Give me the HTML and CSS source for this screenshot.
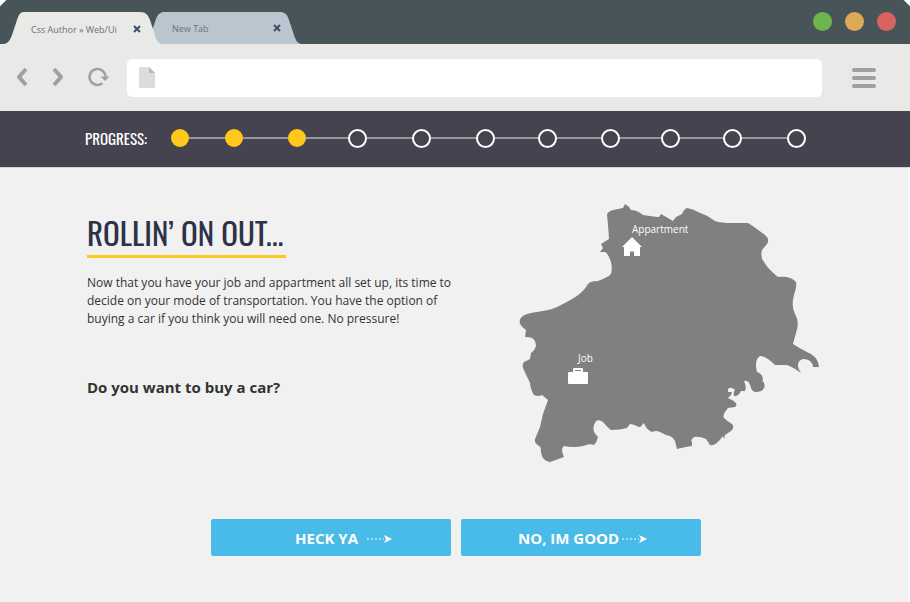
FILE: index.html
```html
<!DOCTYPE html>
<html lang="en">
<head>
<meta charset="utf-8">
<meta name="viewport" content="width=device-width, initial-scale=1">
<title>Rollin’ on out...</title>
<link rel="stylesheet" href="styles.css">
</head>
<body>
<header class="browser">
  <div class="titlebar">
    <div class="tabs">
      <div class="tab tab-active">
        <svg class="tab-shape" viewBox="0 0 153 32" preserveAspectRatio="none" aria-hidden="true"><path d="M3 32C9 32 11 26 13 20L17 8C19 2 20 0 25 0H140C146 0 148 3 150 8L154 20C156 28 158 32 163 32Z"/></svg>
        <a class="tab-title" href="#">Css Author » Web/Ui</a>
        <button class="tab-close" aria-label="Close tab"><svg viewBox="0 0 8 8"><path d="M1 1L7 7M7 1L1 7"/></svg></button>
      </div>
      <div class="tab tab-idle">
        <svg class="tab-shape" viewBox="0 0 148 32" preserveAspectRatio="none" aria-hidden="true"><path d="M0 32V16L3 7C5 2 7 0 12 0H126C132 0 134 2 136 8L140 20C142 27 144 32 149 32Z"/></svg>
        <a class="tab-title" href="#">New Tab</a>
        <button class="tab-close" aria-label="Close tab"><svg viewBox="0 0 8 8"><path d="M1 1L7 7M7 1L1 7"/></svg></button>
      </div>
    </div>
    <div class="window-controls">
      <button class="dot green" aria-label="Minimize"></button>
      <button class="dot amber" aria-label="Maximize"></button>
      <button class="dot red" aria-label="Close"></button>
    </div>
  </div>
  <div class="toolbar">
    <div class="nav">
      <button class="icon-btn" aria-label="Back"><svg width="12" height="20" viewBox="0 0 12 20"><path d="M10 2L3 10L10 18" fill="none" stroke="#a0a09f" stroke-width="4" stroke-linejoin="round"/></svg></button>
      <button class="icon-btn" aria-label="Forward"><svg width="12" height="20" viewBox="0 0 12 20"><path d="M2 2L9 10L2 18" fill="none" stroke="#a0a09f" stroke-width="4" stroke-linejoin="round"/></svg></button>
      <button class="icon-btn" aria-label="Reload"><svg width="22" height="20" viewBox="0 0 22 20"><path d="M14.500 16.200A8 8 0 1 1 17.500 9.500" fill="none" stroke="#a0a09f" stroke-width="2.500"/><path d="M12.500 9.500H21.500L17 14Z" fill="#a0a09f"/></svg></button>
    </div>
    <div class="address">
      <svg width="16" height="21" viewBox="0 0 16 21" aria-hidden="true"><path d="M0 0H10L16 6V21H0Z" fill="#dcdcdb"/><path d="M10 0L16 6H10Z" fill="#b9b9b8"/></svg>
      <input type="text" aria-label="Address">
    </div>
    <button class="icon-btn menu" aria-label="Menu"><svg width="24" height="20" viewBox="0 0 24 20"><path d="M2 2H22M2 10H22M2 18H22" stroke="#a0a09f" stroke-width="4" stroke-linecap="round"/></svg></button>
  </div>
</header>
<section class="progress">
  <h2 class="progress-label">PROGRESS:</h2>
  <ol class="steps" aria-label="Progress">
    <li class="done"></li><li class="done"></li><li class="done"></li><li></li><li></li><li></li><li></li><li></li><li></li><li></li><li></li>
  </ol>
</section>
<main class="page">
  <div class="content">
    <div class="copy">
      <h1>ROLLIN’ ON OUT...</h1>
      <p class="intro">Now that you have your job and appartment all set up, its time to decide on your mode of transportation. You have the option of buying a car if you think you will need one. No pressure!</p>
      <p class="question">Do you want to buy a car?</p>
    </div>
    <div class="map">
      <svg class="land" viewBox="0 0 320 275" aria-hidden="true"><path d="M97 20Q97 17 103 15L113 13L115 9L119 12L121 15Q127 15 133 20L147 22L149 22L151 19L158 23L163 26L166 22L172 19Q174 14 177 13Q183 14 188 17Q197 20 205 26Q211 28 222 28L238 28Q243 31 255 40Q260 44 257 49L252 55Q250 62 254 67Q258 74 268 82Q281 81 286 87Q287 91 284 100Q281 111 285 119Q290 127 286 138L283 149Q289 153 297 157Q308 161 309 172L303 172Q302 164 293 164Q284 167 291 178Q281 171 277 170L265 170Q256 161 250 161Q244 165 247 177Q253 179 253 185L252 185Q258 192 251 196Q243 199 241 193Q239 184 234 186Q237 192 235 196L231 196Q228 202 224 201Q223 197 225 195Q221 191 218 194L218 197L222 197L221 200L218 203L222 205Q229 209 225 212L218 213Q212 220 214 223Q217 226 222 229Q225 232 221 236L215 240L214 244L213 241Q205 252 200 250L196 244Q189 241 184 242Q180 245 182 247L182 251Q175 252 171 253L167 254L165 246Q164 243 160 241Q155 240 150 237Q146 235 142 237Q136 234 135 230L133 228Q132 232 129 232Q123 229 120 229L117 233Q110 235 101 235Q98 233 93 227Q89 224 86 226Q80 235 88 242Q87 247 84 250Q80 248 73 251Q64 253 54 251Q50 254 54 262L40 267Q32 266 31 257Q31 251 29 251Q24 248 25 244L30 232L33 219L38 205L32 200Q28 202 24 200Q21 196 20 188L13 173Q12 169 14 167L20 164L21 158Q25 155 26 151Q26 141 15 142L16 135Q8 129 10 125Q11 119 27 117L38 115Q45 114 62 104Q73 98 78 89Q80 86 88 86Q98 82 100 80Q103 77 101 67Q98 58 95 57L90 57L93 53L91 49Q94 47 99 44L98 30Z"/></svg>
      <div class="place home">
        <span>Appartment</span>
        <svg width="20" height="19" viewBox="0 0 20 19" aria-hidden="true"><path d="M10 0L20 10H18V19H12V14.500H8V19H2V10H0Z"/></svg>
      </div>
      <div class="place job">
        <span>Job</span>
        <svg width="20" height="16" viewBox="0 0 20 16" aria-hidden="true"><path fill-rule="evenodd" d="M5 4V1Q5 0 6 0H14Q15 0 15 1V4H19Q20 4 20 5V15Q20 16 19 16H1Q0 16 0 15V5Q0 4 1 4ZM7 2V3H13V2Z"/></svg>
      </div>
    </div>
  </div>
  <div class="actions">
    <button class="choice yes">HECK YA <svg width="26" height="8" viewBox="0 0 26 8" aria-hidden="true"><path d="M1 4H18" stroke="#fff" stroke-dasharray="2 2"/><path d="M18 0L26 4L18 8L20 4Z" fill="#fff"/></svg></button>
    <button class="choice no">NO, IM GOOD <svg width="26" height="8" viewBox="0 0 26 8" aria-hidden="true"><path d="M1 4H18" stroke="#fff" stroke-dasharray="2 2"/><path d="M18 0L26 4L18 8L20 4Z" fill="#fff"/></svg></button>
  </div>
</main>
</body>
</html>
```
FILE: styles.css
```css
*, *::before, *::after { box-sizing: border-box; }

body {
  margin: 0;
  min-height: 100vh;
  display: flex;
  flex-direction: column;
  background: #f1f1f1;
  color: #333;
  font-family: "Open Sans", "Noto Sans", sans-serif;
}

h1, h2, p, ol { margin: 0; padding: 0; font-weight: 400; }
button { border: 0; padding: 0; background: none; font: inherit; color: inherit; }
svg { display: block; }

.titlebar {
  display: flex;
  justify-content: space-between;
  height: 44px;
  background: linear-gradient(135deg, #fff 4px, transparent 5px), linear-gradient(225deg, #fff 4px, transparent 5px), #475559;
}
.tabs { display: flex; align-items: flex-end; }
.tab {
  position: relative;
  display: flex;
  align-items: center;
  justify-content: space-between;
  height: 32px;
  font-size: 9px;
  color: #6f6f74;
}
.tab-active { width: 153px; padding: 2px 12px 0 31px; z-index: 1; }
.tab-idle { width: 148px; padding: 0 20px 0 19px; color: #68737c; }
.tab-shape { position: absolute; left: 0; top: 0; width: 100%; height: 100%; overflow: visible; }
.tab-active .tab-shape { fill: #e9e9e7; }
.tab-idle .tab-shape { fill: #b9c6d0; }
.tab-title { position: relative; color: inherit; text-decoration: none; }
.tab-close { position: relative; }
.tab-close svg { width: 8px; height: 8px; fill: none; stroke: #3f5064; stroke-width: 2; }

.window-controls { display: flex; gap: 13px; align-items: center; padding: 0 14px 2px 0; }
.dot { width: 19px; height: 19px; border-radius: 50%; }
.green { background: #70b44c; }
.amber { background: #dcaa54; }
.red { background: #d9645e; }

.toolbar {
  display: flex;
  align-items: center;
  height: 67px;
  padding: 0 34px 0 16px;
  background: #e9e9e7;
}
.nav { display: flex; align-items: center; gap: 24px; width: 111px; padding-bottom: 2px; }
.address {
  flex: 1;
  display: flex;
  align-items: center;
  gap: 10px;
  height: 38px;
  padding: 0 12px;
  border-radius: 5px;
  background: #fff;
}
.address input { flex: 1; border: 0; outline: 0; background: none; font: inherit; font-size: 14px; }
.menu { margin-left: 30px; }

.progress {
  display: flex;
  align-items: center;
  height: 56px;
  padding: 0 104px 2px 85px;
  background: #44434f;
}
.progress-label {
  width: 86px;
  color: #fff;
  font-family: "Oswald", sans-serif;
  font-size: 15px;
  white-space: nowrap;
}
.steps {
  flex: 1;
  display: grid;
  grid-template-columns: 54fr 63fr 60fr 64fr 64fr 63fr 63fr 60fr 62fr 64fr 19px;
  list-style: none;
}
.steps li { display: flex; align-items: center; }
.steps li::before {
  content: "";
  flex: none;
  width: 19px;
  height: 19px;
  border: 2px solid #fff;
  border-radius: 50%;
}
.steps .done::before { width: 18px; height: 18px; border: 0; background: #ffc81b; }
.steps li:not(:last-child)::after { content: ""; flex: 1; height: 2px; background: #96959c; }

.page { flex: 1; border-top: 1px solid #d4d4d6; border-right: 2px solid #f8f8f8; }
.content {
  display: flex;
  justify-content: space-between;
  padding: 27px 78px 0 87px;
}
.copy { width: 372px; padding-top: 14px; }
h1 {
  width: 199px;
  border-bottom: 3px solid #ffc81b;
  color: #2c3349;
  font-family: "Oswald", sans-serif;
  font-size: 31px;
  line-height: 46px;
  white-space: nowrap;
}
.intro { margin-top: 16px; font-size: 12px; line-height: 18px; }
.question { margin-top: 48px; font-size: 15px; line-height: 22px; font-weight: 700; }

.map { position: relative; width: 320px; }
.land { width: 100%; fill: #808080; }
.place { position: absolute; color: #fff; font-size: 10px; line-height: 14px; }
.place svg { fill: #fff; }
.home { left: 122px; top: 27px; }
.home svg { margin-left: -10px; margin-top: 1px; }
.job { left: 68px; top: 156px; }
.job svg { margin-left: -10px; margin-top: 3px; }

.actions { display: flex; justify-content: center; gap: 10px; padding: 49px 0 46px 4px; }
.choice {
  display: flex;
  align-items: center;
  width: 240px;
  height: 37px;
  border-radius: 2px;
  background: #48bbe9;
  color: #fff;
  font-size: 15px;
  font-weight: 700;
}
.yes { gap: 8px; padding-left: 84px; }
.no { gap: 2px; padding-left: 57px; }
.choice svg { margin-top: 2px; }
```
